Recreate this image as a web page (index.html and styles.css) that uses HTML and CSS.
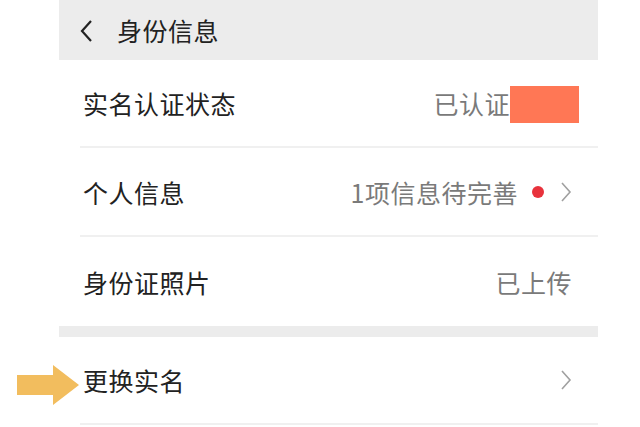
FILE: index.html
```html
<!DOCTYPE html>
<html lang="zh-CN">

<head>
  <meta charset="UTF-8">
  <meta name="viewport" content="width=device-width, initial-scale=1.0">
  <title>身份信息</title>
  <link rel="stylesheet" href="styles.css">
</head>

<body>
  <div class="panel">
    <header class="topbar">
      <svg class="back" width="15" height="24" viewBox="0 0 15 24">
        <path d="M12 2 L3 12 L12 22" fill="none" stroke="#222" stroke-width="2.2" />
      </svg>
      <h1>身份信息</h1>
    </header>

    <ul class="list">
      <li class="row">
        <span class="label">实名认证状态</span>
        <span class="value">已认证<span class="mask"></span></span>
      </li>
      <li class="row">
        <span class="label">个人信息</span>
        <span class="value">1项信息待完善<span class="dot"></span>
          <svg class="chev" width="12" height="22" viewBox="0 0 12 22">
            <path d="M2 2 L10 11 L2 20" fill="none" stroke="#a0a0a0" stroke-width="1.6" />
          </svg>
        </span>
      </li>
      <li class="row last">
        <span class="label">身份证照片</span>
        <span class="value">已上传</span>
      </li>
    </ul>

    <div class="gap"></div>

    <ul class="list">
      <li class="row change">
        <svg class="pointer" width="62" height="40" viewBox="0 0 62 40">
          <path d="M0 10 H36 V0 L62 20 L36 40 V30 H0 Z" fill="#f2bd5e" />
        </svg>
        <span class="label">更换实名</span>
        <span class="value">
          <svg class="chev" width="12" height="22" viewBox="0 0 12 22">
            <path d="M2 2 L10 11 L2 20" fill="none" stroke="#a0a0a0" stroke-width="1.6" />
          </svg>
        </span>
      </li>
    </ul>
  </div>
</body>

</html>
```

FILE: styles.css
```css
* {
  box-sizing: border-box;
  margin: 0;
  padding: 0;
}

body {
  font-family: "Noto Sans CJK SC", "Noto Sans", sans-serif;
  background-color: #fff;
  color: #222;
}

.panel {
  width: 539px;
  margin-left: 59px;
}

/* header */

.topbar {
  height: 60px;
  background-color: #ececec;
  display: flex;
  align-items: center;
  padding-left: 20px;
}

.topbar .back {
  margin-top: 1px;
}

.topbar h1 {
  font-size: 25px;
  font-weight: normal;
  margin-left: 23px;
  letter-spacing: 0.5px;
}

/* rows */

.list {
  list-style: none;
  padding-left: 21px;
}

.row {
  position: relative;
  height: 89px;
  display: flex;
  justify-content: space-between;
  align-items: center;
  padding: 0 26px 0 3px;
  border-bottom: 2px solid #f0f0f0;
  font-size: 25px;
}

.row:first-child {
  height: 88px;
}

.row.last {
  border-bottom: none;
}

.label {
  letter-spacing: 0.5px;
}

.value {
  display: flex;
  align-items: center;
  color: #7a7a7a;
  letter-spacing: 0.5px;
}

.mask {
  display: inline-block;
  width: 69px;
  height: 37px;
  background-color: #ff7755;
  margin-right: -7px;
  margin-top: 2px;
}

.dot {
  display: inline-block;
  width: 12px;
  height: 12px;
  border-radius: 50%;
  background-color: #e8323c;
  margin: 0 16px 0 14px;
}

.chev {
  display: block;
}

.gap {
  height: 11px;
  background-color: #ececec;
}

.change .pointer {
  position: absolute;
  left: -63px;
  top: 28px;
}
```
